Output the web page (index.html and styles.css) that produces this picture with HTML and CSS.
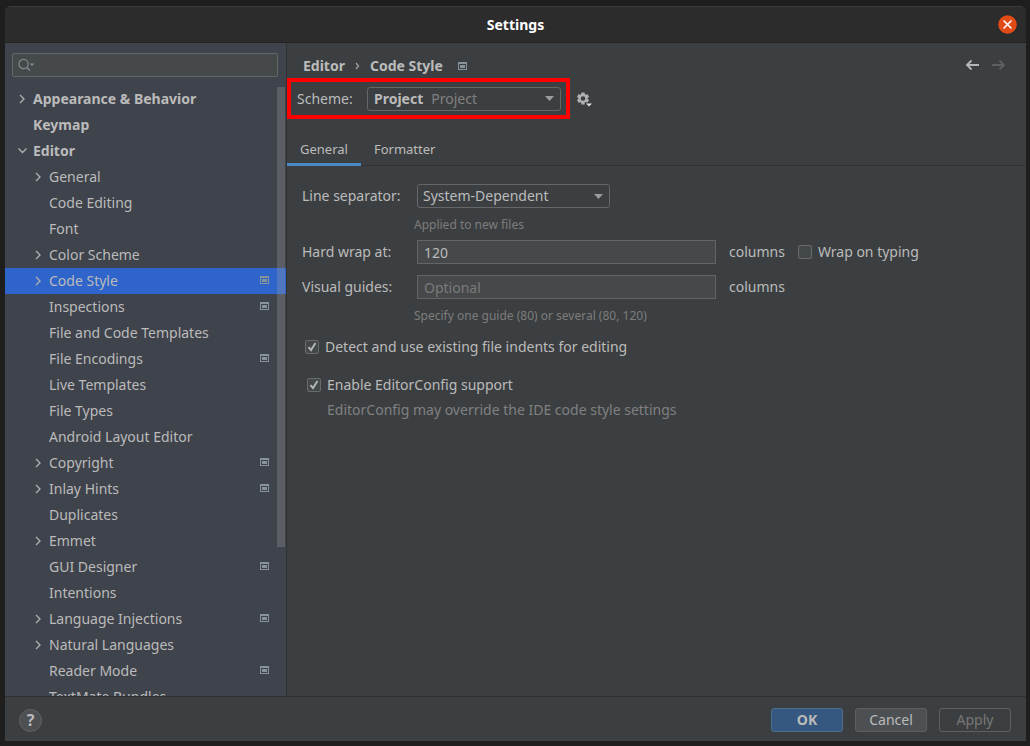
FILE: index.html
```html
<!DOCTYPE html>
<html lang="en">
<head>
<meta charset="utf-8">
<title>Settings</title>
<link rel="stylesheet" href="styles.css">
</head>
<body>
<svg class="symbols" aria-hidden="true">
  <symbol id="right" viewBox="0 0 16 16"><path d="M6 4l4 4-4 4" fill="none" stroke="#adadad" stroke-width="1.400"/></symbol>
  <symbol id="down" viewBox="0 0 16 16"><path d="M4.500 5.500 8.500 9.500l4-4" fill="none" stroke="#adadad" stroke-width="1.400"/></symbol>
  <symbol id="project" viewBox="0 0 9 8"><path d="M0 0h9v8H0zM1 2v5h7V2z" fill="#87939a" fill-rule="evenodd"/><path d="M2 3h5v3H2z" fill="#87939a"/></symbol>
  <symbol id="arrow" viewBox="0 0 9 5"><path d="M0 0h9L4.500 5z" fill="#9a9da0"/></symbol>
  <symbol id="tick" viewBox="0 0 14 14"><path d="M3.500 7.200 6 10l4.500-7" fill="none" stroke="#b4b4b4" stroke-width="2"/></symbol>
</svg>
<div class="window">
  <header class="titlebar">
    <h1 class="title">Settings</h1>
    <button class="close" type="button" aria-label="Close">
      <svg width="19" height="19" viewBox="0 0 19 19"><circle cx="9.500" cy="9.500" r="9.300" fill="#e24a17"/><path d="m6 6 7 7m0-7-7 7" stroke="#fff" stroke-width="1.600" stroke-linecap="round"/></svg>
    </button>
  </header>
  <div class="body">
    <aside class="sidebar">
      <div class="search">
        <svg class="search-icon" width="18" height="14" viewBox="0 0 18 14"><circle cx="5.500" cy="6" r="4.600" fill="none" stroke="#7f8b91" stroke-width="1.200"/><path d="m8.700 9.200 3.300 3.300" stroke="#7f8b91" stroke-width="1.600"/><path d="M11.500 5.500h5L14 8z" fill="#7f8b91"/></svg>
        <input class="search-input" type="text" aria-label="Search settings">
      </div>
      <nav class="tree" aria-label="Settings pages">
        <a class="row top" href="#"><svg class="chevron"><use href="#right"/></svg><span class="name">Appearance &amp; Behavior</span></a>
        <a class="row top" href="#"><span class="chevron"></span><span class="name">Keymap</span></a>
        <a class="row top" href="#"><svg class="chevron"><use href="#down"/></svg><span class="name">Editor</span></a>
        <a class="row" href="#"><svg class="chevron"><use href="#right"/></svg><span class="name">General</span></a>
        <a class="row" href="#"><span class="chevron"></span><span class="name">Code Editing</span></a>
        <a class="row" href="#"><span class="chevron"></span><span class="name">Font</span></a>
        <a class="row" href="#"><svg class="chevron"><use href="#right"/></svg><span class="name">Color Scheme</span></a>
        <a class="row selected" href="#" aria-current="page"><svg class="chevron"><use href="#right"/></svg><span class="name">Code Style</span><svg class="mark"><use href="#project"/></svg></a>
        <a class="row" href="#"><span class="chevron"></span><span class="name">Inspections</span><svg class="mark"><use href="#project"/></svg></a>
        <a class="row" href="#"><span class="chevron"></span><span class="name">File and Code Templates</span></a>
        <a class="row" href="#"><span class="chevron"></span><span class="name">File Encodings</span><svg class="mark"><use href="#project"/></svg></a>
        <a class="row" href="#"><span class="chevron"></span><span class="name">Live Templates</span></a>
        <a class="row" href="#"><span class="chevron"></span><span class="name">File Types</span></a>
        <a class="row" href="#"><span class="chevron"></span><span class="name">Android Layout Editor</span></a>
        <a class="row" href="#"><svg class="chevron"><use href="#right"/></svg><span class="name">Copyright</span><svg class="mark"><use href="#project"/></svg></a>
        <a class="row" href="#"><svg class="chevron"><use href="#right"/></svg><span class="name">Inlay Hints</span><svg class="mark"><use href="#project"/></svg></a>
        <a class="row" href="#"><span class="chevron"></span><span class="name">Duplicates</span></a>
        <a class="row" href="#"><svg class="chevron"><use href="#right"/></svg><span class="name">Emmet</span></a>
        <a class="row" href="#"><span class="chevron"></span><span class="name">GUI Designer</span><svg class="mark"><use href="#project"/></svg></a>
        <a class="row" href="#"><span class="chevron"></span><span class="name">Intentions</span></a>
        <a class="row" href="#"><svg class="chevron"><use href="#right"/></svg><span class="name">Language Injections</span><svg class="mark"><use href="#project"/></svg></a>
        <a class="row" href="#"><svg class="chevron"><use href="#right"/></svg><span class="name">Natural Languages</span></a>
        <a class="row" href="#"><span class="chevron"></span><span class="name">Reader Mode</span><svg class="mark"><use href="#project"/></svg></a>
        <a class="row" href="#"><span class="chevron"></span><span class="name">TextMate Bundles</span></a>
        <div class="thumb"></div>
      </nav>
    </aside>
    <main class="main">
      <div class="crumbs">
        <span>Editor</span>
        <svg width="5" height="8" viewBox="0 0 5 8"><path d="m1 1 2.500 3L1 7" fill="none" stroke="#a5a5a5" stroke-width="1.200"/></svg>
        <span>Code Style</span>
        <svg class="crumb-mark"><use href="#project"/></svg>
        <span class="spacer"></span>
        <button class="icon-button nav" type="button" aria-label="Back"><svg width="14" height="12" viewBox="0 0 14 12"><path d="M14 6H2m4.500-4.500L2 6l4.500 4.500" fill="none" stroke="#b4b7b9" stroke-width="1.800"/></svg></button>
        <button class="icon-button nav" type="button" aria-label="Forward" disabled><svg width="14" height="12" viewBox="0 0 14 12"><path d="M0 6h12M7.500 1.500 12 6l-4.500 4.500" fill="none" stroke="#5d5f61" stroke-width="1.800"/></svg></button>
      </div>
      <div class="scheme-row">
        <div class="scheme">
          <label class="scheme-label" for="scheme">Scheme:</label>
          <div class="combo scheme-combo">
            <select class="select strong" id="scheme"><option>Project</option></select>
            <span class="combo-text"><b class="ghost">Project</b><span>Project</span></span>
            <svg class="combo-arrow"><use href="#arrow"/></svg>
          </div>
        </div>
        <button class="icon-button" type="button" aria-label="Scheme actions">
          <svg width="16" height="16" viewBox="0 0 16 16">
            <g stroke="#afb1b3" stroke-width="3.400"><path d="M7 1.500v3M7 10.500v3"/><path d="M7 1.500v3M7 10.500v3" transform="rotate(60 7 7.500)"/><path d="M7 1.500v3M7 10.500v3" transform="rotate(120 7 7.500)"/></g>
            <circle cx="7" cy="7.500" r="3.500" fill="none" stroke="#afb1b3" stroke-width="2.400"/>
            <path d="M8.500 11.500h8v4h-5z" fill="#3c3f41"/><path d="M10 12.500h6l-3 3z" fill="#e0e0e0"/>
          </svg>
        </button>
      </div>
      <div class="tabs" role="tablist">
        <button class="tab active" type="button" role="tab" aria-selected="true">General</button>
        <button class="tab" type="button" role="tab" aria-selected="false">Formatter</button>
      </div>
      <form class="form">
        <div class="field">
          <label for="separator">Line separator:</label>
          <div class="combo separator-combo">
            <select class="select" id="separator"><option>System-Dependent</option></select>
            <svg class="combo-arrow"><use href="#arrow"/></svg>
          </div>
        </div>
        <p class="hint">Applied to new files</p>
        <div class="field">
          <label for="wrap">Hard wrap at:</label>
          <input class="text" id="wrap" type="text" value="120">
          <span class="unit">columns</span>
          <span class="check"><input id="typing" type="checkbox"><svg class="tick"><use href="#tick"/></svg></span>
          <label class="check-label" for="typing">Wrap on typing</label>
        </div>
        <div class="field second">
          <label for="guides">Visual guides:</label>
          <input class="text" id="guides" type="text" placeholder="Optional">
          <span class="unit">columns</span>
        </div>
        <p class="hint">Specify one guide (80) or several (80, 120)</p>
        <div class="option">
          <span class="check"><input id="detect" type="checkbox" checked><svg class="tick"><use href="#tick"/></svg></span>
          <label class="check-label" for="detect">Detect and use existing file indents for editing</label>
        </div>
        <div class="option config">
          <span class="check"><input id="config" type="checkbox" checked><svg class="tick"><use href="#tick"/></svg></span>
          <label class="check-label" for="config">Enable EditorConfig support</label>
        </div>
        <p class="note">EditorConfig may override the IDE code style settings</p>
      </form>
    </main>
  </div>
  <footer class="footer">
    <button class="help" type="button" aria-label="Help">?</button>
    <span class="spacer"></span>
    <button class="button primary" type="button">OK</button>
    <button class="button" type="button">Cancel</button>
    <button class="button" type="button" disabled>Apply</button>
  </footer>
</div>
</body>
</html>
```
FILE: styles.css
```css
* { box-sizing: border-box; }
body {
  margin: 0;
  height: 100vh;
  padding: 6px 4px 5px 5px;
  background: #1e1e1e;
  color: #bbbbbb;
  font: 14px/20px "Noto Sans", sans-serif;
}
button, input, select { font: inherit; color: inherit; margin: 0; }
button { padding: 0; border: 0; background: none; }
svg { display: block; flex: none; }
.symbols { display: none; }
.spacer { flex: 1; }
.window {
  height: 100%;
  display: flex;
  flex-direction: column;
  overflow: hidden;
  border-radius: 6px 6px 0 0;
  background: #3c3f41;
}
.titlebar {
  flex: none;
  height: 37px;
  display: grid;
  align-items: center;
  border-top: 1px solid #3b3b3b;
  border-bottom: 1px solid #242424;
  background: #2c2c2c;
}
.title { grid-area: 1 / 1; margin: 0; color: #fff; font-size: 14px; line-height: 20px; text-align: center; }
.close { grid-area: 1 / 1; justify-self: end; margin-right: 9px; }
.body { flex: 1; min-height: 0; display: flex; }
.sidebar {
  flex: none;
  width: 282px;
  display: flex;
  flex-direction: column;
  border-right: 1px solid #323232;
  background: #3f434c;
}
.search {
  flex: none;
  height: 24px;
  display: flex;
  align-items: center;
  margin: 10px 8px 9px 7px;
  padding-left: 5px;
  border: 1px solid #646667;
  border-radius: 2px;
  background: #45494a;
}
.search-input { flex: 1; min-width: 0; height: 20px; border: 0; outline: 0; background: none; }
.tree { position: relative; flex: 1; min-height: 0; overflow: hidden; }
.row {
  height: 26px;
  display: flex;
  align-items: center;
  gap: 3px;
  padding: 0 17px 0 25px;
  color: inherit;
  text-decoration: none;
}
.row.top { padding-left: 9px; font-weight: bold; }
.row.selected { background: #2f65ca; }
.chevron { flex: none; width: 16px; height: 16px; }
.name { flex: 1; white-space: nowrap; }
.mark { width: 9px; height: 8px; margin-bottom: 2px; }
.thumb { position: absolute; top: 1px; right: 1px; width: 8px; height: 460px; background: rgba(166, 166, 166, .28); }
.main { flex: 1; min-width: 0; }
.crumbs { height: 35px; display: flex; align-items: center; gap: 10px; padding: 10px 20px 0 16px; font-weight: bold; }
.crumb-mark { width: 9px; height: 8px; margin-left: 5px; }
.nav { margin-bottom: 2px; }
.nav + .nav { margin-left: 3px; }
.scheme-row { display: flex; align-items: center; gap: 6px; }
.scheme { display: flex; align-items: center; height: 41px; width: 283px; padding: 0 5px 0 6px; border: 4px solid #f00; }
.scheme-label { flex: 1; }
.combo { display: grid; align-items: center; height: 24px; }
.scheme-combo { width: 194px; }
.separator-combo { width: 193px; }
.select {
  grid-area: 1 / 1;
  width: 100%;
  height: 24px;
  padding: 0 5px;
  appearance: none;
  border: 1px solid #646667;
  border-radius: 3px;
  background: #3c3f41;
}
.strong { padding: 0 6px; font-weight: bold; }
.combo-text { grid-area: 1 / 1; display: flex; gap: 8px; padding-left: 7px; color: #808080; pointer-events: none; }
.ghost { visibility: hidden; }
.combo-arrow { grid-area: 1 / 1; justify-self: end; width: 9px; height: 5px; margin-right: 7px; pointer-events: none; }
.tabs { height: 47px; display: flex; align-items: flex-end; border-bottom: 1px solid #323232; }
.tab { height: 36px; margin-bottom: -1px; padding: 4px 13px 0; border-bottom: 3px solid transparent; font-size: 13px; }
.tab.active { border-bottom-color: #4a88c7; }
.form { padding: 18px 15px; }
.field { height: 24px; display: grid; grid-template-columns: 115px 299px auto auto 1fr; align-items: center; }
.field.second { margin-top: 11px; }
.text { width: 100%; height: 24px; padding: 0 6px; border: 1px solid #646464; outline: 0; background: #45494a; }
.text::placeholder { color: #7a7a7a; opacity: 1; }
.unit { margin: 0 13px; }
.hint { margin: 0 0 0 112px; padding-top: 2px; color: #7c7c7c; font-size: 12px; line-height: 30px; }
.check { flex: none; display: grid; width: 14px; height: 14px; }
.check input { grid-area: 1 / 1; width: 14px; height: 14px; appearance: none; border: 1px solid #6b6b6b; border-radius: 2px; background: #43494a; }
.tick { grid-area: 1 / 1; width: 14px; height: 14px; visibility: hidden; pointer-events: none; }
.check input:checked + .tick { visibility: visible; }
.check-label { margin-left: 6px; }
.option { height: 32px; display: flex; align-items: center; padding-left: 3px; }
.option.config { margin-top: 6px; padding-left: 5px; }
.note { margin: 0 0 0 25px; color: #808080; line-height: 18px; }
.footer { flex: none; height: 45px; display: flex; align-items: center; gap: 12px; padding: 2px 15px 0 14px; border-top: 1px solid #303030; }
.help { width: 23px; height: 23px; border: 1px solid #606365; border-radius: 50%; background: #4c5052; font-size: 16px; font-weight: bold; }
.button { width: 72px; height: 24px; border: 1px solid #5e6060; border-radius: 3px; background: #4c5052; }
.button.primary { border-color: #4c708c; background: #365880; font-weight: bold; }
.button:disabled { background: none; color: #777777; }
```
